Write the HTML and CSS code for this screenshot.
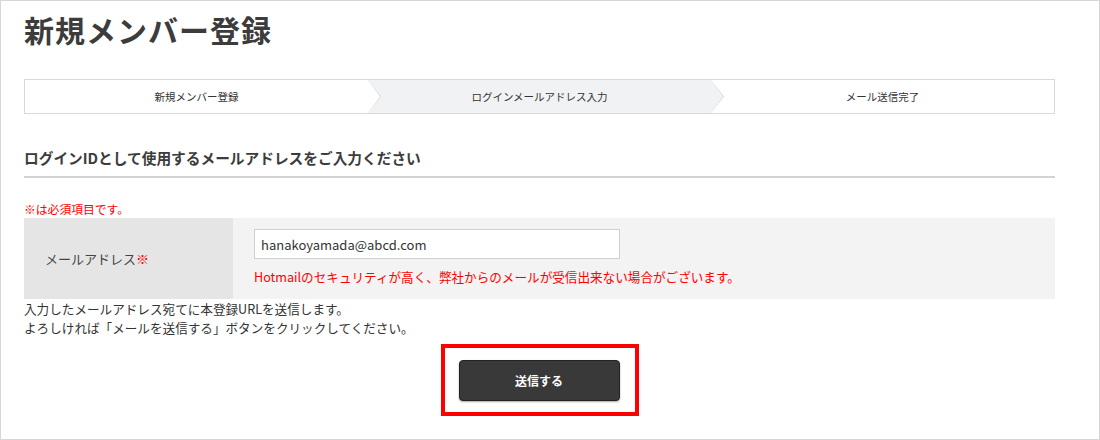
FILE: index.html
```html
<!DOCTYPE html>
<html lang="ja">
<head>
    <meta charset="UTF-8">
    <meta name="viewport" content="width=device-width, initial-scale=1.0">
    <title>新規メンバー登録</title>
    <link rel="stylesheet" href="styles.css">
</head>
<body>
    <div class="page">
        <h1 class="title">新規メンバー登録</h1>

        <ol class="steps">
            <li class="step">新規メンバー登録</li>
            <li class="step current">ログインメールアドレス入力</li>
            <li class="step">メール送信完了</li>
        </ol>

        <h2 class="section-title">ログインIDとして使用するメールアドレスをご入力ください</h2>

        <p class="required-note">※は必須項目です。</p>

        <div class="form-row">
            <div class="form-label">メールアドレス<span class="req">※</span></div>
            <div class="form-value">
                <input class="text-input" type="text" value="hanakoyamada@abcd.com">
                <p class="warning">Hotmailのセキュリティが高く、弊社からのメールが受信出来ない場合がございます。</p>
            </div>
        </div>

        <p class="info">入力したメールアドレス宛てに本登録URLを送信します。<br>よろしければ「メールを送信する」ボタンをクリックしてください。</p>

        <div class="submit-area">
            <div class="highlight">
                <button class="submit-btn" type="button">送信する</button>
            </div>
        </div>
    </div>
</body>
</html>
```

FILE: styles.css
```css
* {
    box-sizing: border-box;
}

body {
    margin: 0;
    padding: 0;
    font-family: "Noto Sans CJK JP", "Noto Sans", sans-serif;
    color: #333;
    background: #fff;
}

.page {
    width: 1100px;
    height: 440px;
    border: 1px solid #d6d6d6;
    padding: 8px 0 0 23px;
    overflow: hidden;
}

.page > * {
    width: 1031px;
}

.title {
    margin: 0;
    font-size: 30px;
    line-height: 40px;
    font-weight: 700;
    letter-spacing: 1px;
    color: #3c3c3c;
}

/* ステップ表示 */
.steps {
    display: flex;
    list-style: none;
    margin: 30px 0 0;
    padding: 0;
    height: 35px;
    border: 1px solid #d9d9d9;
}

.step {
    flex: 1;
    position: relative;
    display: flex;
    align-items: center;
    justify-content: center;
    font-size: 10.5px;
    color: #333;
    background: #fff;
}

.step.current {
    background: #f1f2f4;
}

.step:not(:last-child)::before,
.step:not(:last-child)::after {
    content: "";
    position: absolute;
    top: 0;
    bottom: 0;
    clip-path: polygon(0 0, 100% 50%, 0 100%);
}

.step:not(:last-child)::before {
    right: -13px;
    width: 13px;
    background: #d6d6d6;
    z-index: 1;
}

.step:not(:last-child)::after {
    right: -12px;
    width: 12px;
    background: inherit;
    z-index: 2;
}

.section-title {
    margin: 33px 0 0;
    padding-bottom: 7px;
    font-size: 14.7px;
    line-height: 22px;
    font-weight: 700;
    color: #3c3c3c;
    border-bottom: 2px solid #d3d3d3;
}

.required-note {
    margin: 22px 0 0;
    font-size: 11.8px;
    line-height: 18px;
    color: #f00;
}

/* フォーム */
.form-row {
    display: flex;
    height: 81px;
}

.form-label {
    width: 209px;
    background: #e5e5e5;
    display: flex;
    align-items: center;
    padding-left: 21px;
    font-size: 13px;
    color: #444;
}

.req {
    color: #f00;
}

.form-value {
    flex: 1;
    background: #f3f3f3;
    padding: 11px 21px 0;
}

.text-input {
    display: block;
    width: 366px;
    height: 30px;
    margin: 0;
    padding: 0 6px;
    border: 1px solid #cfcfcf;
    background: #fff;
    font-family: inherit;
    font-size: 13px;
    color: #333;
    outline: none;
}

.warning {
    margin: 9px 0 0;
    font-size: 12.6px;
    line-height: 18px;
    color: #f00;
}

.info {
    margin: 0;
    font-size: 12.6px;
    line-height: 19px;
    color: #333;
}

.submit-area {
    display: flex;
    justify-content: center;
    margin-top: 7px;
}

.highlight {
    border: 4px solid #f00;
    padding: 12px 15px 11px 14px;
}

.submit-btn {
    display: block;
    width: 161px;
    height: 41px;
    border: 1px solid #222;
    border-radius: 4px;
    background: #393939;
    box-shadow: 0 1px 2px rgba(0, 0, 0, 0.35);
    color: #fff;
    font-family: inherit;
    font-size: 12px;
    font-weight: 700;
    cursor: pointer;
}
```
